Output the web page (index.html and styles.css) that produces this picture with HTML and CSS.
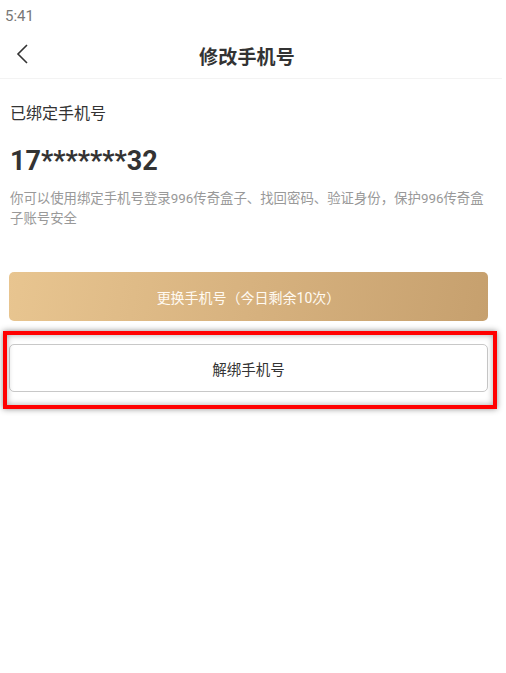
FILE: index.html
```html
<!DOCTYPE html>
<html lang="zh-CN">
<head>
  <meta charset="UTF-8">
  <meta name="viewport" content="width=device-width, initial-scale=1">
  <title>修改手机号</title>
  <link rel="stylesheet" href="styles.css">
</head>
<body>
  <div class="status-bar">5:41</div>

  <header class="nav">
    <button class="back" aria-label="返回">
      <svg width="12" height="20" viewBox="0 0 12 20"><path d="M11 1 L2 10 L11 19" fill="none" stroke="#333" stroke-width="1.6"/></svg>
    </button>
    <h1>修改手机号</h1>
  </header>

  <main class="content">
    <p class="label">已绑定手机号</p>
    <p class="phone">17*******32</p>
    <p class="desc">你可以使用绑定手机号登录996传奇盒子、找回密码、验证身份，保护996传奇盒子账号安全</p>

    <div class="actions">
      <button class="btn btn-gold">更换手机号（今日剩余10次）</button>
      <div class="unbind-wrap">
        <button class="btn btn-outline">解绑手机号</button>
        <div class="highlight"></div>
      </div>
    </div>
  </main>
</body>
</html>
```

FILE: styles.css
```css
* {box-sizing:border-box;margin:0;padding:0;}
html,body {min-height:100%;}
body {background:#fff;color:#333;font-family:Roboto,"Noto Sans CJK SC",sans-serif;width:506px;min-height:673px;}

.status-bar {height:32px;padding:6px 0 0 5px;font-size:15px;color:#777;line-height:20px;}

.nav {height:47px;border-bottom:1px solid #f3f3f3;display:flex;align-items:center;justify-content:center;position:relative;margin-right:4px;}
.nav h1 {font-size:19px;font-weight:700;color:#333;margin-right:8px;letter-spacing:0.2px;}
.back {position:absolute;left:15px;top:12px;border:none;background:none;width:14px;height:22px;cursor:pointer;}

.content {padding:24px 18px 40px 10px;}
.label {font-size:16px;line-height:22px;color:#333;}
.phone {font-size:27px;font-weight:700;line-height:32px;margin-top:20px;color:#333;}
.desc {font-size:13.4px;line-height:20px;color:#999;margin:12px -6px 0 0;}

.actions {margin:43px 0 0 -1px;display:flex;flex-direction:column;gap:23px;}
.btn {display:block;width:100%;height:49px;border-radius:5px;font-family:Roboto,"Noto Sans CJK SC",sans-serif;font-size:14px;cursor:pointer;}
.btn-gold {border:none;color:#fffaf2;background:linear-gradient(100deg,#e8c590 0%,#d7b27f 50%,#c6a06e 100%);}
.btn-outline {height:48px;background:#fff;border:1px solid #c8c8c8;color:#333;font-size:14.5px;}

.unbind-wrap {position:relative;}
.highlight {position:absolute;left:-6px;right:-9px;top:-13px;bottom:-17px;border:4px solid #f00;box-shadow:0 0 6px rgba(0,0,0,0.45),inset 0 0 6px rgba(0,0,0,0.35);pointer-events:none;}
```
